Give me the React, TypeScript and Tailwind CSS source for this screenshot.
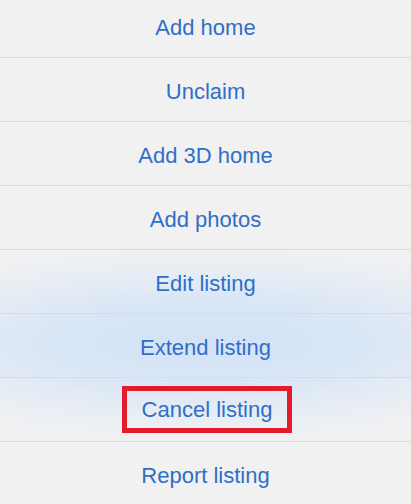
const items = [
  "Add home",
  "Unclaim",
  "Add 3D home",
  "Add photos",
  "Edit listing",
  "Extend listing",
  "Cancel listing",
  "Report listing",
];

export default function App() {
  return (
    <div className="h-[504px] w-[411px] overflow-hidden bg-[#f1f1f1] bg-[radial-gradient(ellipse_95%_20%_at_50%_68%,#d3e2f6_0%,#d9e6f6_40%,#e9eef4_75%,#f1f1f1_100%)] font-['Helvetica','Liberation_Sans',sans-serif]">
      <div className="-mt-[6px] flex flex-col">
        {items.map((label) => (
          <div
            key={label}
            className="flex h-[64px] items-center justify-center border-b border-[#d9dbdd] pt-[3px]"
          >
            {label === "Cancel listing" ? (
              <span className="-mt-[7px] -mb-[3px] ml-[3px] border-[5px] border-[#e41b2a] px-[15px] py-[5px] text-[22px] leading-[27px] text-[#2f6fc7]">
                {label}
              </span>
            ) : (
              <span className="text-[22px] leading-[27px] text-[#2f6fc7]">{label}</span>
            )}
          </div>
        ))}
      </div>
    </div>
  );
}
